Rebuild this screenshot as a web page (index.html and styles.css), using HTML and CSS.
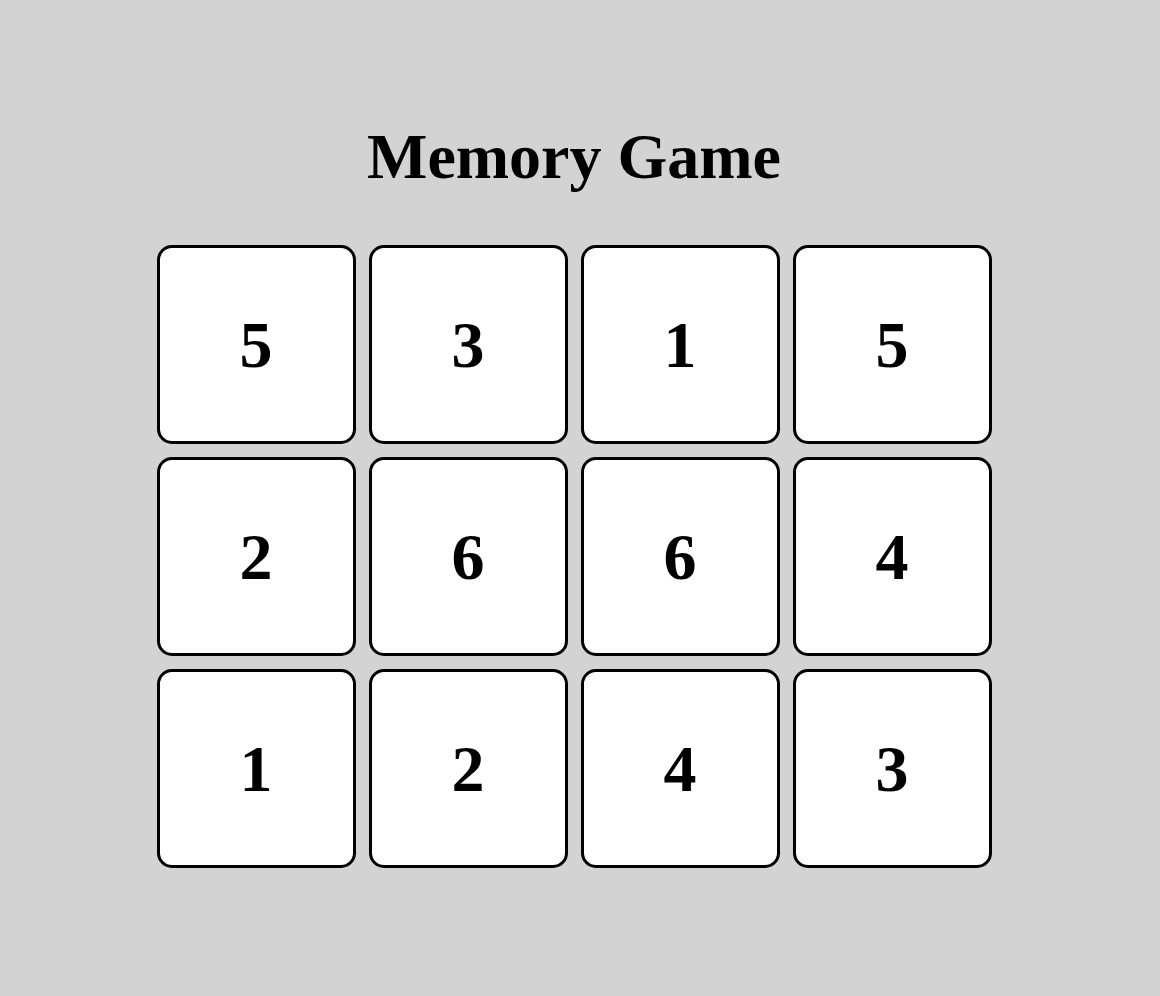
FILE: index.html
```html
<!DOCTYPE html>
<html lang="en">
<head>
  <meta charset="UTF-8">
  <meta name="viewport" content="width=device-width, initial-scale=1.0">
  <title>Memory Game</title>
  <link rel="stylesheet" href="styles.css">
</head>
<body>
  <div class="game">
    <h1>Memory Game</h1>

    <!-- Board: 3 rows of 4 cards -->
    <div class="board">
      <div class="card">5</div>
      <div class="card">3</div>
      <div class="card">1</div>
      <div class="card">5</div>
      <div class="card">2</div>
      <div class="card">6</div>
      <div class="card">6</div>
      <div class="card">4</div>
      <div class="card">1</div>
      <div class="card">2</div>
      <div class="card">4</div>
      <div class="card">3</div>
    </div>
  </div>
</body>
</html>
```

FILE: styles.css
```css
body {
  margin: 0;
  background-color: #d3d3d3;
  font-family: "Liberation Serif", "Times New Roman", serif;
  color: #000;
}

.game {
  display: flex;
  flex-direction: column;
  align-items: center;
  padding: 120px 12px 0 0;
}

h1 {
  margin: 0 0 51px;
  font-size: 64px;
  font-weight: bold;
}

.board {
  display: grid;
  grid-template-columns: repeat(4, 199px);
  grid-auto-rows: 199px;
  gap: 13px;
}

.card {
  box-sizing: border-box;
  display: flex;
  justify-content: center;
  align-items: center;
  border: 3px solid #000;
  border-radius: 15px;
  background-color: #fff;
  font-size: 66px;
  font-weight: bold;
}
```
